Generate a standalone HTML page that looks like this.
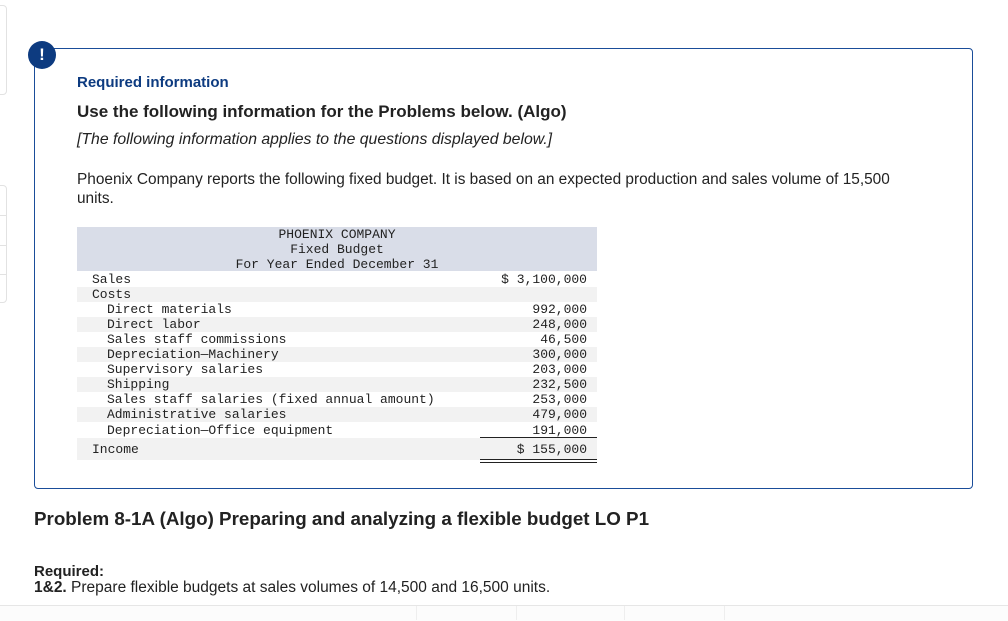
<!DOCTYPE html>
<html><head><style>
body{margin:0;width:1008px;height:620px;background:#fff;position:relative;overflow:hidden;font-family:"Liberation Sans",sans-serif;color:#222}
.abs{position:absolute}
.box{left:34px;top:48px;width:937px;height:439px;border:1px solid #1a4d99;border-radius:4px}
.circ{left:28px;top:41px;width:28px;height:28px;border-radius:50%;background:#0d3b80;color:#fff;font-weight:bold;font-size:17px;text-align:center;line-height:28px}
table{border-collapse:collapse;font-family:"Liberation Mono",monospace;font-size:13px;color:#222}
td{padding:0;height:15px;line-height:15px;white-space:pre}
.g td{background:#f2f2f2}
.r{text-align:right;padding-right:10px}
</style></head><body>
<div class="abs" style="left:-6px;top:5px;width:11px;height:88px;border:1px solid #e2e2e2;border-radius:4px"></div>
<div class="abs" style="left:-6px;top:185px;width:11px;height:116px;border:1px solid #e2e2e2;border-radius:4px"></div>
<div class="abs" style="left:0;top:215px;width:6px;border-top:1px solid #e2e2e2"></div>
<div class="abs" style="left:0;top:245px;width:6px;border-top:1px solid #e2e2e2"></div>
<div class="abs" style="left:0;top:274px;width:6px;border-top:1px solid #e2e2e2"></div>
<div class="abs box"></div>
<div class="abs circ">!</div>
<div class="abs" style="left:77px;top:74px;font-size:15px;font-weight:bold;color:#0d3b80">Required information</div>
<div class="abs" style="left:77px;top:102px;font-size:17px;font-weight:bold;color:#222">Use the following information for the Problems below. (Algo)</div>
<div class="abs" style="left:77px;top:131px;font-size:15.8px;font-style:italic">[The following information applies to the questions displayed below.]</div>
<div class="abs" style="left:77px;top:170px;font-size:15.4px;line-height:19px;width:845px">Phoenix Company reports the following fixed budget. It is based on an expected production and sales volume of 15,500 units.</div>
<div class="abs" style="left:77px;top:227px;width:520px;height:44px;background:#d9dde8"></div>
<div class="abs" style="left:77px;top:227px;width:520px;text-align:center;font-family:'Liberation Mono',monospace;font-size:13px;line-height:15px;color:#222">PHOENIX COMPANY<br>Fixed Budget<br>For Year Ended December 31</div>
<table class="abs" style="left:77px;top:272px;width:520px">
<tr><td style="padding-left:15px">Sales</td><td class="r">$ 3,100,000</td></tr>
<tr class="g"><td style="padding-left:15px">Costs</td><td class="r"></td></tr>
<tr><td style="padding-left:30px">Direct materials</td><td class="r">992,000</td></tr>
<tr class="g"><td style="padding-left:30px">Direct labor</td><td class="r">248,000</td></tr>
<tr><td style="padding-left:30px">Sales staff commissions</td><td class="r">46,500</td></tr>
<tr class="g"><td style="padding-left:30px">Depreciation—Machinery</td><td class="r">300,000</td></tr>
<tr><td style="padding-left:30px">Supervisory salaries</td><td class="r">203,000</td></tr>
<tr class="g"><td style="padding-left:30px">Shipping</td><td class="r">232,500</td></tr>
<tr><td style="padding-left:30px">Sales staff salaries (fixed annual amount)</td><td class="r">253,000</td></tr>
<tr class="g"><td style="padding-left:30px">Administrative salaries</td><td class="r">479,000</td></tr>
<tr><td style="padding-left:30px;height:16px">Depreciation—Office equipment</td><td class="r" style="height:16px">191,000</td></tr>
<tr class="g"><td style="padding-left:15px;height:22px">Income</td><td class="r" style="height:22px">$ 155,000</td></tr>
</table>
<div class="abs" style="left:480px;top:437px;width:117px;border-top:1px solid #222"></div>
<div class="abs" style="left:480px;top:459px;width:117px;height:2px;border-top:1px solid #222;border-bottom:1px solid #222"></div>
<div class="abs" style="left:34px;top:508px;font-size:18.8px;font-weight:bold">Problem 8-1A (Algo) Preparing and analyzing a flexible budget LO P1</div>
<div class="abs" style="left:34px;top:563px;font-size:15px;font-weight:bold">Required:</div>
<div class="abs" style="left:34px;top:579px;font-size:15.5px"><b>1&amp;2.</b> Prepare flexible budgets at sales volumes of 14,500 and 16,500 units.</div>
<div class="abs" style="left:0;top:605px;width:1008px;height:15px;border-top:1px solid #e6e6e6;background:#fcfcfc"></div>
<div class="abs" style="left:416px;top:606px;height:14px;border-left:1px solid #eee"></div>
<div class="abs" style="left:516px;top:606px;height:14px;border-left:1px solid #eee"></div>
<div class="abs" style="left:624px;top:606px;height:14px;border-left:1px solid #eee"></div>
<div class="abs" style="left:724px;top:606px;height:14px;border-left:1px solid #eee"></div>
</body></html>
